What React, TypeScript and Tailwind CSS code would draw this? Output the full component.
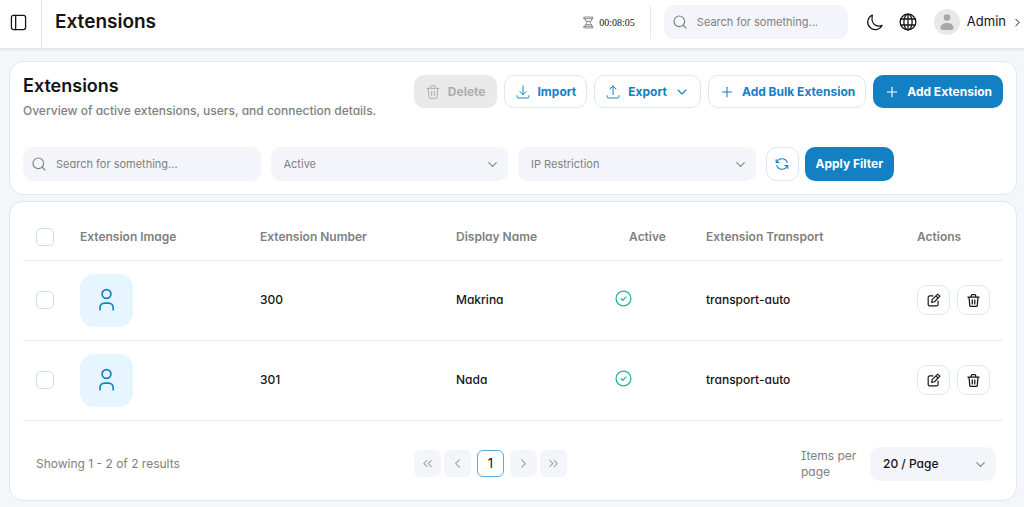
import { useState, type ReactNode } from "react";
import { ChevronDown, ChevronLeft, ChevronRight, ChevronsLeft, ChevronsRight, Plus, Search } from "lucide-react";

interface Extension {
  number: string;
  displayName: string;
  transport: string;
}

const extensions: Extension[] = [
  { number: "300", displayName: "Makrina", transport: "transport-auto" },
  { number: "301", displayName: "Nada", transport: "transport-auto" },
];

function Icon({ children, className = "size-4", width = 1.5 }: { children: ReactNode; className?: string; width?: number }) {
  return (
    <svg
      viewBox="0 0 24 24"
      fill="none"
      stroke="currentColor"
      strokeWidth={width}
      strokeLinecap="round"
      strokeLinejoin="round"
      className={`shrink-0 ${className}`}
      aria-hidden="true"
    >
      {children}
    </svg>
  );
}

function TrashIcon({ className, width }: { className?: string; width?: number }) {
  return (
    <Icon className={className} width={width}>
      <path d="M3 6.500h18M4.800 6.500 6 20a1.600 1.600 0 0 0 1.600 1.500h8.800A1.600 1.600 0 0 0 18 20l1.200-13.500M8.500 6.500V4A1.500 1.500 0 0 1 10 2.500h4A1.500 1.500 0 0 1 15.500 4v2.500M10 11v6.500M14 11v6.500" />
    </Icon>
  );
}

function SearchBox({ id, className = "" }: { id: string; className?: string }) {
  return (
    <label htmlFor={id} className={`flex h-[34px] items-center gap-[9px] rounded-[10px] bg-[#f4f5fa] px-2 ${className}`}>
      <Search className="size-4 shrink-0 text-[#808080]" strokeWidth={1.7} />
      <input
        id={id}
        type="text"
        aria-label="Search"
        placeholder="Search for something..."
        className="w-full min-w-0 bg-transparent text-[11px] outline-none placeholder:text-[#808080]"
      />
    </label>
  );
}

function SelectBox({ label, options, className }: { label: string; options: string[]; className: string }) {
  return (
    <div className="relative">
      <select aria-label={label} className={`h-[34px] w-full appearance-none rounded-[10px] bg-[#f4f5fa] px-[13px] outline-none ${className}`}>
        {options.map((option) => (
          <option key={option}>{option}</option>
        ))}
      </select>
      <ChevronDown className="pointer-events-none absolute top-[10px] right-2 size-[15px] text-[#808080]" strokeWidth={1.8} />
    </div>
  );
}

function Checkbox({ label, checked, onChange }: { label: string; checked: boolean; onChange: () => void }) {
  return (
    <input
      type="checkbox"
      aria-label={label}
      checked={checked}
      onChange={onChange}
      className="block size-[18px] appearance-none rounded-[5px] border border-[#c9deeb] bg-white checked:bg-[#1480c4]"
    />
  );
}

const outlineButton =
  "flex h-[33px] items-center gap-[7px] rounded-[10px] border border-[#dbe9f3] px-2.5 text-xs font-bold text-[#1480c4]";
const pageButton = "flex size-[27px] items-center justify-center rounded-[6px] bg-[#f4f5fa] text-[#a9abb0]";
const actionButton = "flex h-[30px] w-[33px] items-center justify-center rounded-[10px] border border-[#dbe9f3]";

export default function App() {
  const [selected, setSelected] = useState<string[]>([]);
  const allSelected = selected.length === extensions.length;

  const toggle = (number: string) =>
    setSelected((prev) => (prev.includes(number) ? prev.filter((n) => n !== number) : [...prev, number]));

  return (
    <div className="min-h-screen bg-[#f4f6fa] font-['Inter',sans-serif] text-[#141414] [font-feature-settings:'cv11']">
      <header className="relative flex h-12 items-center bg-white shadow-[0_1px_4px_rgba(0,0,0,0.12)]">
        <button aria-label="Toggle sidebar" className="flex h-full w-[42px] shrink-0 items-center border-r border-[#dbe9f3] pb-1 pl-2.5">
          <Icon className="size-[17px]" width={1.8}>
            <rect x="2" y="2" width="20" height="20" rx="3" />
            <path d="M8 2v20" />
          </Icon>
        </button>
        <h1 className="ml-[13px] pb-1 text-[19px] font-semibold">Extensions</h1>

        <div className="ml-auto flex items-center pb-1">
          <Icon className="size-[13px] text-[#666]" width={1.4}>
            <path d="M4 2h16v3H4zM4 19h16v3H4zM5.500 5c0 4.500 3.500 5 3.500 7s-3.500 2.500-3.500 7M18.500 5c0 4.500-3.500 5-3.500 7s3.500 2.500 3.500 7M8 10h8M8 16h8" />
          </Icon>
          <span className="ml-1 font-['Liberation_Serif',serif] text-[10px]">00:08:05</span>
          <div className="mr-[13px] ml-[15px] h-[33px] w-px bg-[#dbe9f3]" />
          <SearchBox id="global-search" className="w-[184px] [font-feature-settings:normal]" />
          <button aria-label="Dark mode" className="ml-[18px]">
            <Icon className="size-[17px]" width={1.7}>
              <path d="M9 1.500A10.700 10.700 0 1 0 22.800 16c-1.500.8-3 1.200-4.800 1A9.500 9.500 0 0 1 8.500 8c-.1-2.500.1-4.500.5-6.500z" />
            </Icon>
          </button>
          <button aria-label="Language" className="ml-4">
            <Icon className="size-[18px]" width={1.7}>
              <circle cx="12" cy="12" r="10.500" />
              <ellipse cx="12" cy="12" rx="5.500" ry="10.500" />
              <path d="M12 1.500v21M2.500 8h19M2.500 16h19" />
            </Icon>
          </button>
          <button className="ml-[17px] flex items-center text-[13px]">
            <svg viewBox="0 0 26 26" className="size-[26px]" aria-hidden="true">
              <circle cx="13" cy="13" r="13" fill="#e8e8e8" />
              <circle cx="13" cy="8.500" r="3.300" fill="#a8a8a8" />
              <path d="M6.500 19c0-3.500 3-5 6.500-5s6.500 1.500 6.500 5c0 1.300-1 2-2.500 2H9c-1.500 0-2.500-.7-2.500-2z" fill="#a8a8a8" />
            </svg>
            <span className="ml-[7px]">Admin</span>
            <ChevronRight className="ml-[5px] size-[13px]" strokeWidth={1.8} />
          </button>
        </div>
      </header>

      <main className="flex flex-col gap-[6px] pt-[13px] pr-[7px] pb-[6px] pl-[9px]">
        <section className="rounded-[14px] border border-[#dbe9f3] bg-white p-[13px]">
          <div className="flex items-start justify-between">
            <div>
              <h2 className="text-lg leading-[22px] font-semibold">Extensions</h2>
              <p className="mt-1 text-xs leading-5 font-medium text-[#808080]">
                Overview of active extensions, users, and connection details.
              </p>
            </div>
            <div className="flex gap-[7px] [font-feature-settings:normal]">
              <button disabled className="flex h-[33px] items-center gap-[7px] rounded-[10px] bg-[#e9e9e9] px-[11px] text-xs font-bold text-[#adadad]">
                <TrashIcon />
                Delete
              </button>
              <button className={outlineButton}>
                <Icon>
                  <path d="M12 3v13M7.500 11.500 12 16l4.500-4.500M3 17.500v1.500a2 2 0 0 0 2 2h14a2 2 0 0 0 2-2v-1.500" />
                </Icon>
                Import
              </button>
              <button className={outlineButton}>
                <Icon>
                  <path d="M12 16V3M7.500 7.500 12 3l4.500 4.500M3 17.500v1.500a2 2 0 0 0 2 2h14a2 2 0 0 0 2-2v-1.500" />
                </Icon>
                Export
                <ChevronDown className="size-4" strokeWidth={1.6} />
              </button>
              <button className={outlineButton}>
                <Plus className="size-4" strokeWidth={1.6} />
                Add Bulk Extension
              </button>
              <button className="flex h-[33px] items-center gap-[7px] rounded-[10px] bg-[#1480c4] px-[11px] text-xs font-bold text-white">
                <Plus className="size-4" strokeWidth={1.6} />
                Add Extension
              </button>
            </div>
          </div>

          <div className="mt-[26px] grid grid-cols-4 gap-2.5">
            <SearchBox id="extension-search" />
            <SelectBox label="Status" options={["Active", "Inactive"]} className="text-[11px] text-[#808080]" />
            <SelectBox label="IP Restriction" options={["IP Restriction"]} className="text-[11px] text-[#808080]" />
            <div className="flex gap-[6px]">
              <button aria-label="Refresh" className="flex h-[34px] w-[33px] items-center justify-center rounded-[10px] border border-[#dbe9f3] text-[#1480c4]">
                <Icon className="size-[14px]" width={1.8}>
                  <path d="M3 9.500A9.500 9.500 0 0 1 21 9.500M2 4.500v5h5M21 14.500A9.500 9.500 0 0 1 3 14.500M22 19.500v-5h-5" />
                </Icon>
              </button>
              <button className="h-[34px] rounded-[10px] bg-[#1480c4] px-[11px] text-xs font-bold text-white [font-feature-settings:normal]">
                Apply Filter
              </button>
            </div>
          </div>
        </section>

        <section className="rounded-[14px] border border-[#dbe9f3] bg-white px-[13px] pt-3 pb-[19px]">
          <table className="w-full table-fixed text-left text-xs">
            <colgroup>
              <col className="w-[44px]" />
              <col className="w-[180px]" />
              <col className="w-[196px]" />
              <col className="w-[159px]" />
              <col className="w-[91px]" />
              <col className="w-[211px]" />
              <col className="w-[99px]" />
            </colgroup>
            <thead>
              <tr className="h-[46px] border-b border-[#ebeef1] text-[#808080] *:px-[13px] *:font-semibold">
                <th>
                  <Checkbox
                    label="Select all"
                    checked={allSelected}
                    onChange={() => setSelected(allSelected ? [] : extensions.map((e) => e.number))}
                  />
                </th>
                <th>Extension Image</th>
                <th>Extension Number</th>
                <th>Display Name</th>
                <th className="text-center">Active</th>
                <th>Extension Transport</th>
                <th>Actions</th>
              </tr>
            </thead>
            <tbody>
              {extensions.map((ext) => (
                <tr key={ext.number} className="h-20 border-b border-[#ebeef1] font-medium *:px-[13px]">
                  <td>
                    <Checkbox
                      label={`Select ${ext.number}`}
                      checked={selected.includes(ext.number)}
                      onChange={() => toggle(ext.number)}
                    />
                  </td>
                  <td>
                    <div className="flex size-[53px] items-center justify-center rounded-[14px] bg-[#e6f5ff] text-[#1480c4]">
                      <svg
                        viewBox="0 0 26 26"
                        fill="none"
                        stroke="currentColor"
                        strokeWidth="1.7"
                        strokeLinecap="round"
                        className="size-[26px]"
                        aria-hidden="true"
                      >
                        <circle cx="12.500" cy="7" r="4.400" />
                        <path d="M6 22.700v-2a4.600 4.600 0 0 1 4.600-4.600h4a4.600 4.600 0 0 1 4.600 4.600v2" />
                      </svg>
                    </div>
                  </td>
                  <td>{ext.number}</td>
                  <td>{ext.displayName}</td>
                  <td>
                    <Icon className="mb-[3px] size-[17px] text-[#26b394]" width={1.8}>
                      <circle cx="12" cy="12" r="10.500" />
                      <path d="m8.500 12.300 2.500 2.400 4.500-4.700" />
                    </Icon>
                  </td>
                  <td>{ext.transport}</td>
                  <td>
                    <div className="flex gap-[7px]">
                      <button aria-label={`Edit ${ext.number}`} className={actionButton}>
                        <Icon className="size-[14px]" width={2}>
                          <path d="M10 5H4.500A2.500 2.500 0 0 0 2 7.500v12A2.500 2.500 0 0 0 4.500 22h12a2.500 2.500 0 0 0 2.500-2.500V14M8 16l1-5 9.500-9L22 5.500 13 15zM15.500 5.500l3 3" />
                        </Icon>
                      </button>
                      <button aria-label={`Delete ${ext.number}`} className={actionButton}>
                        <TrashIcon className="size-[15px]" width={2} />
                      </button>
                    </div>
                  </td>
                </tr>
              ))}
            </tbody>
          </table>

          <div className="mt-[26px] flex items-center justify-between pr-[7px] pl-[13px]">
            <p className="text-xs text-[#808080]">Showing 1 - 2 of 2 results</p>
            <nav aria-label="Pagination" className="flex gap-[3px]">
              <button aria-label="First page" className={pageButton}>
                <ChevronsLeft className="size-[15px]" strokeWidth={1.8} />
              </button>
              <button aria-label="Previous page" className={pageButton}>
                <ChevronLeft className="size-[15px]" strokeWidth={1.8} />
              </button>
              <button className="mx-[3px] size-[27px] rounded-[6px] border border-[#5aaadb] text-[13px]">1</button>
              <button aria-label="Next page" className={pageButton}>
                <ChevronRight className="size-[15px]" strokeWidth={1.8} />
              </button>
              <button aria-label="Last page" className={pageButton}>
                <ChevronsRight className="size-[15px]" strokeWidth={1.8} />
              </button>
            </nav>
            <div className="flex items-center gap-[13px]">
              <span className="w-14 text-xs leading-4 text-[#808080] [font-feature-settings:'cv11','cv08']">Items per page</span>
              <div className="w-[126px]">
                <SelectBox label="Items per page" options={["20 / Page", "50 / Page", "100 / Page"]} className="text-xs font-medium" />
              </div>
            </div>
          </div>
        </section>
      </main>
    </div>
  );
}
